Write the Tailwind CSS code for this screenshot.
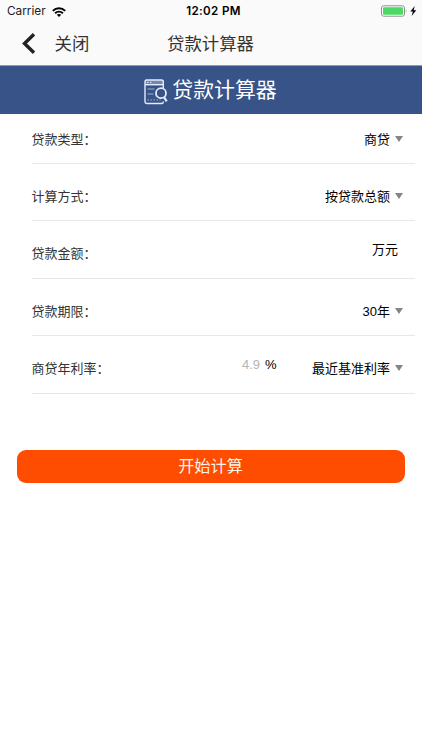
<!DOCTYPE html>
<html lang="zh-CN">
<head>
<meta charset="utf-8">
<meta name="viewport" content="width=device-width, initial-scale=1">
<title>贷款计算器</title>
<script src="https://cdn.jsdelivr.net/npm/@tailwindcss/browser@4"></script>
</head>
<body class="bg-white">
<div class="flex h-[750px] w-[422px] flex-col overflow-hidden bg-white font-[Inter,'Noto_Sans_CJK_SC',sans-serif] text-black">
  <header class="h-[66px] shrink-0 border-b border-[#8f9bb8] bg-[#fafafa]">
    <div class="grid h-[22px] grid-cols-3 items-center pr-[5px] pl-[7px]">
      <div class="flex items-center gap-[6px] pt-[1px] text-[11.8px] text-[#222]">
        <span>Carrier</span>
        <svg class="h-[10px] w-[14px]" viewBox="0 0 14 10" fill="none" stroke="#000" stroke-width="2"><path d="M.8 3.9C4.3.5 9.7.5 13.2 3.9"/><path d="M3.1 6.2c2.2-2 5.6-2 7.8 0"/><path d="M7 10 4.8 7.8c1.2-1.1 3.2-1.1 4.4 0z" fill="#000" stroke="none"/></svg>
      </div>
      <div class="pt-[2px] pl-[3px] text-center text-[11.6px] font-semibold tracking-[.35px] whitespace-nowrap">12:02 PM</div>
      <div class="flex items-center justify-end">
        <svg class="h-[12px] w-[37px]" viewBox="0 0 37 12"><rect x="1.5" y=".8" width="23" height="10.4" rx="2.2" fill="#fff" stroke="#8e8e8e"/><rect x="3" y="2.3" width="20" height="7.4" rx="1" fill="#4cd964"/><path d="M25.8 4.2q1.5 1.8 0 3.6z" fill="#8e8e8e"/><path d="M34.8 1 30.3 6.6h2.6L31.6 11l4.7-5.8h-2.7z" fill="#000"/></svg>
      </div>
    </div>
    <div class="grid h-[43px] grid-cols-[1fr_88px_1fr] items-center text-[17.4px] leading-none text-[#333]">
      <div class="flex items-center pl-[22px]">
        <svg class="h-[21px] w-[14px]" viewBox="0 0 14 21" fill="none" stroke="#222" stroke-width="3.4"><path d="M12 1.2 2.5 10.5 12 19.8"/></svg>
        <span class="pl-[18.5px]">关闭</span>
      </div>
      <h1 class="whitespace-nowrap">贷款计算器</h1>
    </div>
  </header>

  <div class="flex h-[48px] shrink-0 items-center justify-center gap-[4px] bg-[#385387] pr-[1px] text-white">
    <svg class="mt-[3px] h-[26px] w-[24px]" viewBox="0 0 24 26" fill="none" stroke="#e4ebfa" stroke-width="1.4"><path d="M1 5.5V2.5Q1 1 2.5 1h15Q19.3 1 19.3 2.5v3z" fill="#7387b3" stroke="none"/><path d="M19.3 9V2.5Q19.3 1 17.5 1H2.5Q1 1 1 2.5v20.3q0 1.7 1.7 1.7h15q1.6 0 1.6-2"/><path d="M1 5.7h18"/><path d="M3 3.4h1.5M6 3.4h1.5" stroke-width="1"/><path d="M3.5 10h7M3.5 15h6" stroke="#9fb0d4" stroke-width="1"/><path d="M3.5 21h13" stroke="#9fb0d4" stroke-width="1.2" stroke-dasharray="1.5 1.5"/><circle cx="17" cy="14.2" r="5" fill="#385387" stroke-width="1.8"/><path d="m20 18.2 2.7 4.2" stroke-width="2.2"/></svg>
    <h2 class="text-[20.9px] leading-none">贷款计算器</h2>
  </div>

  <main class="text-[13px] leading-[20px]">
    <section class="mr-[7px] ml-[32px]">
      <div class="flex h-[50px] items-center justify-between border-b border-[#e8e8e8] pr-[12px]">
        <span class="-ml-[.5px] text-[#333]">贷款类型：</span>
        <span class="flex items-center gap-[5px]">商贷<svg class="h-[6px] w-[8px]" viewBox="0 0 8 6"><path d="M0 0h8L4 6z" fill="#858585"/></svg></span>
      </div>
      <div class="flex h-[57px] items-center justify-between border-b border-[#e8e8e8] pt-[8px] pr-[12px]">
        <span class="-ml-[.5px] text-[#333]">计算方式：</span>
        <span class="flex items-center gap-[5px]">按贷款总额<svg class="h-[6px] w-[8px]" viewBox="0 0 8 6"><path d="M0 0h8L4 6z" fill="#858585"/></svg></span>
      </div>
      <div class="flex h-[58px] items-center justify-between border-b border-[#e8e8e8] pt-[7px] pr-[17px]">
        <span class="-ml-[.5px] text-[#333]">贷款金额：</span>
        <span class="pb-[8px]">万元</span>
      </div>
      <div class="flex h-[57px] items-center justify-between border-b border-[#e8e8e8] pt-[8px] pr-[12px]">
        <span class="-ml-[.5px] text-[#333]">贷款期限：</span>
        <span class="flex items-center gap-[5px]"><span class="pt-[1px] font-['Liberation_Sans','Noto_Sans_CJK_SC',sans-serif]">30年</span><svg class="h-[6px] w-[8px]" viewBox="0 0 8 6"><path d="M0 0h8L4 6z" fill="#858585"/></svg></span>
      </div>
      <div class="flex h-[58px] items-center border-b border-[#e8e8e8] pt-[7px] pr-[12px]">
        <span class="-ml-[.5px] w-[210.5px] text-[#333]">商贷年利率：</span>
        <span class="flex gap-[5px] pb-[6px] font-['Liberation_Sans',sans-serif]"><span class="text-[#b5b5b5]">4.9</span><span>%</span></span>
        <span class="ml-auto flex items-center gap-[5px]">最近基准利率<svg class="h-[6px] w-[8px]" viewBox="0 0 8 6"><path d="M0 0h8L4 6z" fill="#858585"/></svg></span>
      </div>
    </section>
    <button class="mt-[56px] ml-[16.5px] block h-[33px] w-[388px] rounded-[9px] bg-[#fe4c00] text-center text-[16.2px] leading-[33px] text-[#fff3ed]">开始计算</button>
  </main>
</div>
</body>
</html>
